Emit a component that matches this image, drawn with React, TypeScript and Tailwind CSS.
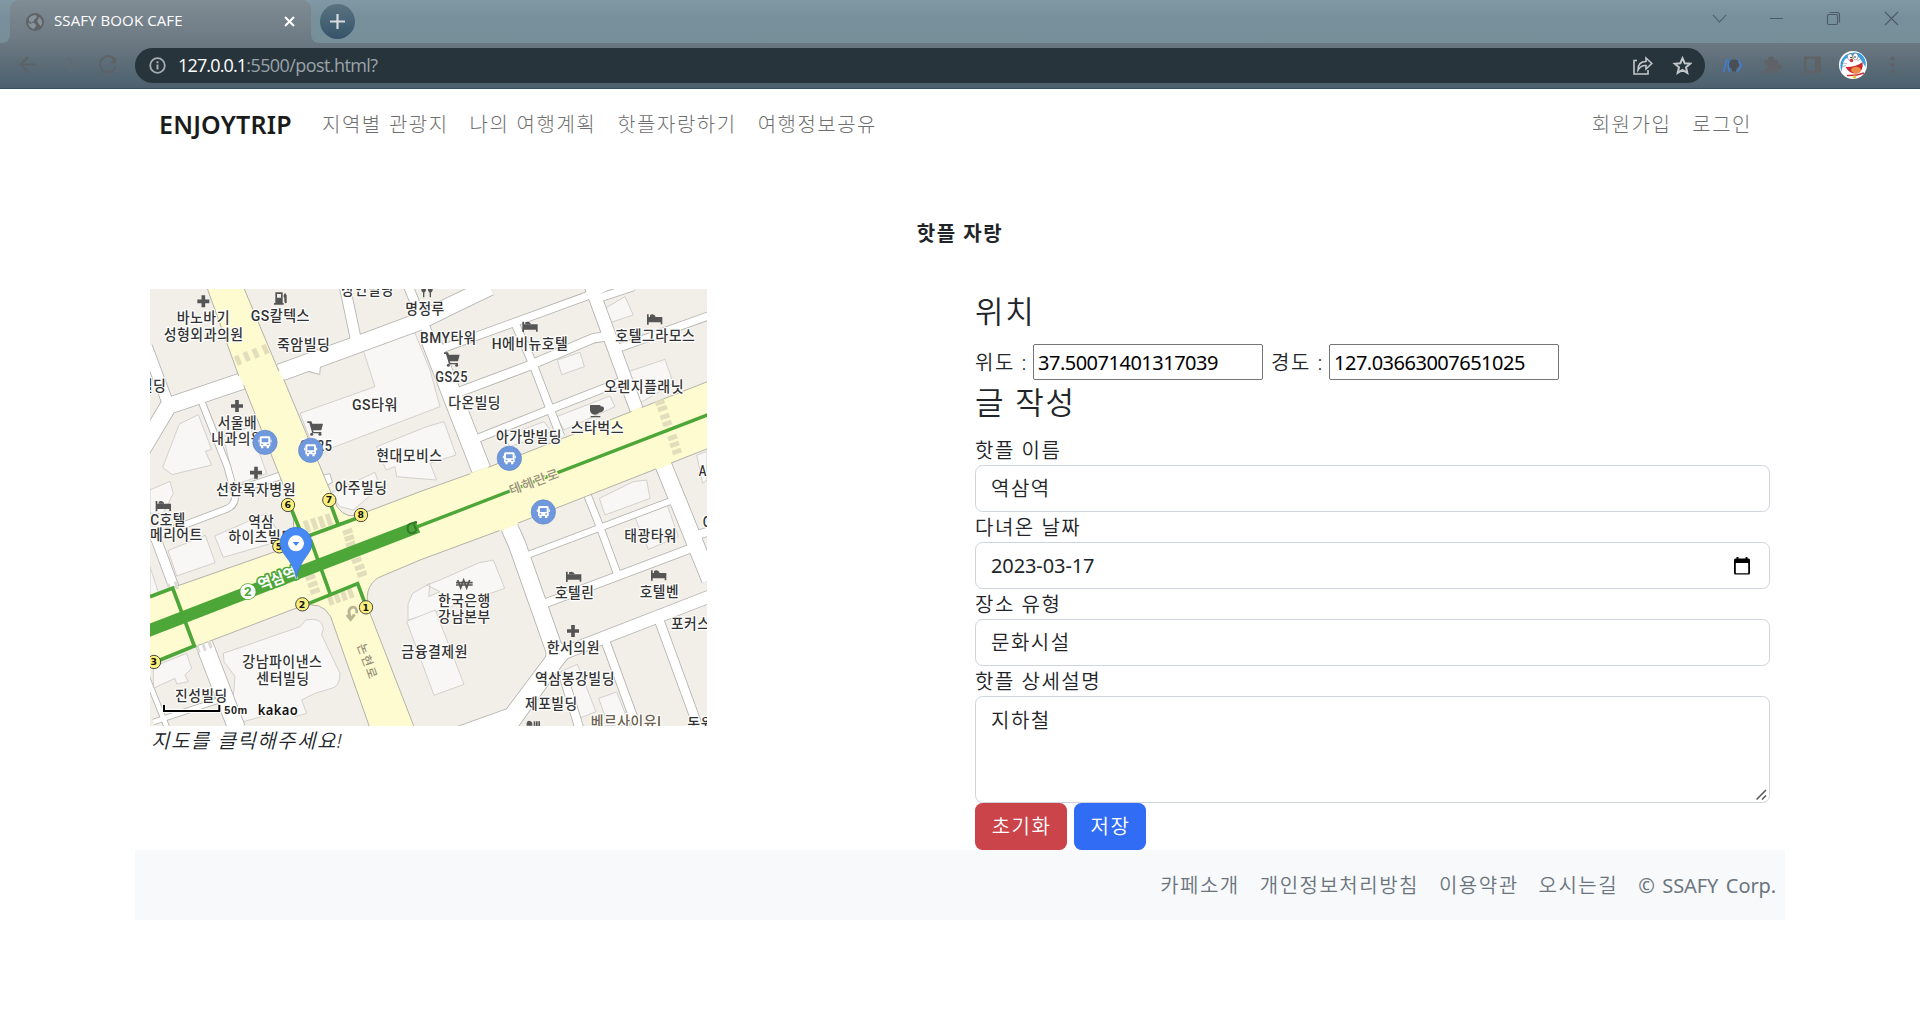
import React from "react";

const KR = "font-['Noto_Sans','Noto_Sans_CJK_KR',sans-serif]";

/* Map drawing units: one unit is a third of a pixel. */
type Road = { d: string; w: number };

const roads: Road[] = [
  { d: "M0 520L85 378L310 302", w: 48 },
  { d: "M420 278L640 198L830 128L930 78L1050 20", w: 50 },
  { d: "M20 200L80 360", w: 32 },
  { d: "M612 10L648 180", w: 30 },
  { d: "M805 20L868 170", w: 26 },
  { d: "M183 360L262 560L284 640Q290 672 262 686L30 774", w: 18 },
  { d: "M280 634L420 588", w: 20 },
  { d: "M38 750L105 930", w: 28 },
  { d: "M190 1085L290 1345", w: 50 },
  { d: "M20 1190L82 1345", w: 14 },
  { d: "M40 1326L255 1255", w: 14 },
  { d: "M868 170L1028 580", w: 56 },
  { d: "M890 212L1330 52L1400 20", w: 22 },
  { d: "M1350 10L1492 395", w: 38 },
  { d: "M1375 55L1480 20", w: 22 },
  { d: "M1425 208L1710 106", w: 22 },
  { d: "M960 335L1170 256L1360 175L1405 168", w: 26 },
  { d: "M1125 130L1180 255L1262 470", w: 22 },
  { d: "M1005 478L1230 388L1450 302", w: 22 },
  { d: "M1105 735L1130 790L1245 1115", w: 50 },
  { d: "M1268 1180L1318 1345", w: 24 },
  { d: "M1155 828L1600 660", w: 18 },
  { d: "M1340 640L1372 720L1432 882", w: 20 },
  { d: "M1210 972L1650 806", w: 24 },
  { d: "M1568 550L1615 665L1710 900", w: 48 },
  { d: "M1275 1118L1720 945", w: 36 },
  { d: "M1395 1080L1492 1345", w: 24 },
  { d: "M1558 1022L1676 1345", w: 26 },
  { d: "M1655 770L1720 750", w: 24 },
];

const buildings = [
  "M480 400L705 320L660 180L800 145L822 152L870 270L900 380L580 502L530 530Z",
  "M118 432L175 404L215 508L196 514L215 555L96 584L68 562Z",
  "M250 470L330 440L380 580L285 615Z",
  "M710 500L860 440L912 425L948 525L870 550L890 600L770 590L765 560L738 570Z",
  "M570 640L705 577L720 622L640 690L600 680Z",
  "M84 812L196 766L226 848L110 888Z",
  "M224 768L380 700L430 780L250 832Z",
  "M30 630L90 604L100 640L70 700L30 700Z",
  "M30 860L56 940L30 950Z",
  "M250 1120L285 1108L480 1040L498 1020Q545 1010 550 1045L545 1065L600 1180Q600 1220 575 1225L525 1240L485 1260L500 1300L465 1310L455 1285L310 1325L280 1250L285 1190L252 1145Z",
  "M40 1160L140 1120L155 1165L135 1185L145 1205L110 1212L105 1195L40 1225Z",
  "M804 972L818 940L870 910L866 950L900 935L860 915L900 900L1018 848L1060 840L1094 925L1010 955L840 1010L804 1020Z",
  "M800 1024L886 990L972 1213L882 1246Z",
  "M1395 85L1455 50L1480 105L1410 128Z",
  "M1252 240L1320 217L1333 260L1265 284Z",
  "M1465 275L1575 238L1600 310L1490 375Z",
  "M1250 410L1410 348L1425 380L1272 450Z",
  "M1090 470L1212 425L1235 455L1110 500Z",
  "M1378 655L1480 605L1520 600L1530 655L1395 705Z",
  "M1483 708L1580 670L1615 770L1525 808Z",
  "M1262 1175L1312 1153L1368 1295L1310 1318Z",
  "M1376 1255L1430 1236L1470 1337L1405 1337Z",
  "M1670 525L1701 514L1701 600L1688 610Z",
];

type Label = [string, number, number, number];

// text, centre x, baseline y, drawn width
const labels: Label[] = [
  ["바노바기", 190, 130, 160],
  ["성형외과의원", 191, 179, 240],
  ["GS칼텍스", 421, 123, 178],
  ["죽암빌딩", 491, 211, 160],
  ["상언빌딩", 683, 46, 158],
  ["명정루", 855, 103, 118],
  ["빌딩", 39, 333, 80],
  ["GS타워", 705, 389, 138],
  ["서울배", 292, 443, 118],
  ["내과의원", 293, 492, 158],
  ["GS25", 528, 514, 98],
  ["현대모비스", 808, 544, 198],
  ["선한목자병원", 348, 644, 240],
  ["아주빌딩", 663, 638, 158],
  ["BMY타워", 925, 189, 170],
  ["H에비뉴호텔", 1170, 206, 230],
  ["GS25", 935, 306, 98],
  ["다온빌딩", 1004, 385, 158],
  ["호텔그라모스", 1546, 183, 240],
  ["오렌지플래닛", 1512, 335, 240],
  ["아가방빌딩", 1167, 485, 198],
  ["스타벅스", 1372, 460, 160],
  ["C호텔", 84, 734, 106],
  ["메리어트", 109, 781, 158],
  ["역삼", 364, 741, 78],
  ["하이츠빌딩", 364, 787, 198],
  ["강남파이낸스", 427, 1162, 240],
  ["센터빌딩", 429, 1211, 160],
  ["진성빌딩", 184, 1262, 158],
  ["금융결제원", 884, 1132, 200],
  ["한국은행", 973, 978, 158],
  ["강남본부", 973, 1027, 158],
  ["호텔린", 1304, 955, 118],
  ["호텔벤", 1558, 952, 118],
  ["태광타워", 1532, 782, 158],
  ["포커스", 1652, 1048, 118],
  ["한서의원", 1300, 1118, 160],
  ["역삼봉강빌딩", 1305, 1212, 240],
  ["제포빌딩", 1234, 1288, 158],
  ["동원", 1682, 1347, 80],
  ["A", 1688, 588, 24],
  ["C", 1701, 742, 26],
];

function Plus({ x, y }: { x: number; y: number }) {
  return <path d={`M${x - 18} ${y}h36M${x} ${y - 18}v36`} stroke="#555" strokeWidth="11" />;
}

function Bed({ x, y }: { x: number; y: number }) {
  return (
    <g transform={`translate(${x} ${y})`} fill="#555">
      <path d="M-23 -17h5v8h41v22h-5v-6h-36v7h-5z" />
      <path d="M-14 -15q10 -5 16 3v3h-16z" />
    </g>
  );
}

function Cart({ x, y }: { x: number; y: number }) {
  return (
    <g transform={`translate(${x} ${y})`} fill="#555">
      <path d="M-24 -21h12l3 7h32l-5 20h-25l2 5h23v4h-27l-9 -31h-6z" />
      <circle cx="-11" cy="18" r="4.5" />
      <circle cx="14" cy="18" r="4.5" />
    </g>
  );
}

function Bus({ x, y }: { x: number; y: number }) {
  return (
    <g transform={`translate(${x} ${y})`}>
      <circle r="36.5" fill="#7098dc" stroke="#5d84c8" strokeWidth="2" />
      <path
        fill="#fff"
        fillRule="evenodd"
        d="M-12 -18h24q4 0 4 5v25h-4v6h-7v-6h-10v6h-7v-6h-4v-25q0 -5 4 -5zM-10 -12v12h20v-12zM-11 4v4h5v-4zM6 4v4h5v-4z"
      />
      <path d="M-18 -8v8M18 -8v8" stroke="#fff" strokeWidth="3" />
    </g>
  );
}

function Exit({ x, y, n }: { x: number; y: number; n: string }) {
  return (
    <g>
      <circle cx={x} cy={y} r="20" fill="#fcf07c" stroke="#4a4a42" strokeWidth="3" />
      <text
        x={x}
        y={y + 10}
        textAnchor="middle"
        fontSize="28"
        fontWeight="700"
        fill="#111"
        fontFamily="DejaVu Sans, sans-serif"
      >
        {n}
      </text>
    </g>
  );
}

function MapView() {
  const halo = {
    stroke: "#fff",
    strokeWidth: 7,
    paintOrder: "stroke" as const,
    strokeLinejoin: "round" as const,
  };
  return (
    <svg className="block h-[437px] w-[557px]" viewBox="30 27 1671 1311" preserveAspectRatio="none">
      <rect x="30" y="27" width="1671" height="1311" fill="#f2efe9" />
      <g fill="#f8f7f5" stroke="#d2d1cd" strokeWidth="3">
        {buildings.map((d) => (
          <path key={d} d={d} />
        ))}
      </g>
      <g fill="none" stroke="#b3b2ae" strokeLinejoin="round">
        {roads.map((r) => (
          <path key={r.d} d={r.d} strokeWidth={r.w + 5} />
        ))}
        <path d="M1225 1085L1310 1100L1262 1160L1130 1345H940L1100 1288L1218 1130Z" strokeWidth="5" />
        <path d="M480 268L540 258L538 282L510 274Z" strokeWidth="5" />
        <path d="M545 588L568 582L576 606L556 618Z" strokeWidth="5" />
      </g>
      <g fill="none" stroke="#fff" strokeLinejoin="round">
        {roads.map((r) => (
          <path key={r.d} d={r.d} strokeWidth={r.w} />
        ))}
      </g>
      <path d="M1225 1085L1310 1100L1262 1160L1130 1345H940L1100 1288L1218 1130Z" fill="#fff" />
      <path d="M470 268L540 258L538 282L510 274Z" fill="#fff" />
      <path d="M545 588L568 582L576 606L556 618Z" fill="#fff" />

      <path
        d="M200 20L295 285L312 318L430 615L460 715Q470 780 420 810L20 950V1152L205 1085L480 980Q545 960 572 1010L690 1345H824L690 1000Q665 925 715 893L840 840L1075 753L1135 729L1545 568L1710 503V302L1504 383L1050 560L840 635L650 707Q600 715 580 655L432 300L415 270L310 20Z"
        fill="#fffbd0"
        stroke="#b3b2a8"
        strokeWidth="3"
      />
      <g stroke="#fffbd0" strokeWidth="6">
        <path d="M296 288L311 316" stroke="#fffdf0" />
        <path d="M417 274L431 298" stroke="#fffdf0" />
        <path d="M990 583L1045 563M1475 394L1505 383M1078 751L1134 729M1548 566L1593 549" />
      </g>

      <g stroke="#e2debb" strokeWidth="15">
        <path d="M288 227l12 27M314 216l12 27M341 206l12 27M370 194l12 27" />
        <path d="M1546 372l27 -9M1554 390l27 -9M1561 414l27 -9M1568 435l27 -9M1584 477l27 -9M1590 498l27 -9M1597 519l27 -9" />
        <path d="M495 722l12 34M517 715l12 34M539 709l12 34M561 702l12 34" />
        <path d="M609 760l28 -10M614 779l28 -10M618 798l28 -10M636 846l28 -10M645 867l28 -10M652 887l28 -10" />
        <path d="M497 897l28 -10M504 918l28 -10M511 938l28 -10" />
        <path d="M567 947l10 28M587 940l10 28M607 933l10 28M627 926l10 28" />
        <path d="M170 1096l8 22M188 1090l8 22M206 1083l8 22M84 912l8 22M105 905l8 22" stroke="#dcdad2" strokeWidth="9" />
      </g>

      <path d="M20 1054L834 740" stroke="#4da738" strokeWidth="37" fill="none" />
      <path d="M825 743L1710 402" stroke="#4da738" strokeWidth="10" fill="none" />
      <g stroke="#4da738" strokeWidth="11" fill="none">
        <path d="M30 950L98 924L163 1098L60 1140" />
        <path d="M455 690L480 750M505 768L650 715M568 662L595 735M512 780L570 940" />
        <path d="M505 971L653 911L675 970" />
      </g>

      <g fill="none" stroke="#b9b593" strokeWidth="8">
        <path d="M650 1000v-8q-4 -16 -18 -8q-8 8 -4 18l4 12" />
        <path d="M620 1005l12 14l12 -16" />
      </g>
      <path d="M828 755q-22 12 -25 -8q-2 -14 14 -17l14 -4M822 733l8 20" fill="none" stroke="#35792a" strokeWidth="6" />

      <g fill="#555">
        <Plus x={190} y={64} />
        <Plus x={291} y={378} />
        <Plus x={348} y={578} />
        <Plus x={1299} y={1053} />
        <Bed x={1170} y={142} />
        <Bed x={1544} y={120} />
        <Bed x={70} y={680} />
        <Bed x={1301} y={892} />
        <Bed x={1556} y={888} />
        <Cart x={526} y={445} />
        <Cart x={936} y={238} />
        <path fillRule="evenodd" d="M406 37h22v32h3v5h-29v-5h4zM411 42v11h12v-11zM430 48l5 -10l5 8v22q-6 5 -7 -4v-10z" />
        <path d="M1350 375h31v4q12 -1 11 9q-2 9 -15 10q-5 6 -13 6q-13 -1 -14 -14zM1352 408h29v4h-29z" />
        <path d="M844 20q-2 16 5 18v14h4v-14q7 -2 5 -18zM864 20q-2 16 5 18v14h4v-14q7 -2 5 -18z" />
        <path d="M1160 1337v-8q2 -8 10 -6q7 2 7 8v6zM1181 1324h5v14h-5zM1188 1324h5v14h-5zM1195 1324h5v14h-5z" />
      </g>
      <path d="M953 900l9 24l9 -24l9 24l9 -24M948 908h50M948 915h50" fill="none" stroke="#555" strokeWidth="5" />

      <g
        fontFamily="Roboto, 'Noto Sans CJK KR', sans-serif"
        fontSize="44"
        fontWeight="500"
        fill="#333"
        textAnchor="middle"
        {...halo}
      >
        {labels.map(([t, x, y, w]) => (
          <text key={`${t}${x}`} x={x} y={y} textLength={w} lengthAdjust="spacingAndGlyphs">
            {t}
          </text>
        ))}
        <text x={1458} y={1342} textLength={212} lengthAdjust="spacingAndGlyphs" fill="#6b604b">
          베르사이유I
        </text>
      </g>
      <g
        fontFamily="'Noto Sans CJK KR', sans-serif"
        fontWeight="500"
        fill="#96917a"
        stroke="#fffbd0"
        strokeWidth="6"
        paintOrder="stroke"
      >
        <text transform="translate(1114 645) rotate(-20)" fontSize="39" textLength="156">
          테헤란로
        </text>
        <text transform="translate(651 1096) rotate(70)" fontSize="36" textLength="110">
          논현로
        </text>
      </g>

      <Bus x={375} y={487} />
      <Bus x={512} y={511} />
      <Bus x={1108} y={535} />
      <Bus x={1210} y={696} />

      <g transform="translate(324 935)">
        <circle r="25" fill="#4da738" />
        <circle r="23" fill="#fff" />
        <text y="14" textAnchor="middle" fontSize="40" fontWeight="700" fill="#4da738" fontFamily="Roboto, sans-serif">
          2
        </text>
      </g>
      <text
        transform="translate(361 932) rotate(-20)"
        fontSize="46"
        fontWeight="700"
        fill="#fff"
        stroke="#4da738"
        strokeWidth="10"
        strokeLinejoin="round"
        paintOrder="stroke"
        fontFamily="'Noto Sans CJK KR', sans-serif"
        textLength="124"
      >
        역삼역
      </text>

      <Exit x={444} y={675} n="6" />
      <Exit x={568} y={660} n="7" />
      <Exit x={663} y={705} n="8" />
      <Exit x={418} y={799} n="5" />
      <Exit x={487} y={973} n="2" />
      <Exit x={678} y={982} n="1" />
      <Exit x={42} y={1146} n="3" />

      <path
        d="M469 896Q465 862 432 822Q420 806 420 790A48 48 0 0 1 516 790Q516 806 504 822Q473 862 469 896Z"
        fill="#4689f2"
        stroke="#3474d8"
        strokeWidth="2"
      />
      <circle cx="468" cy="790" r="24" fill="#fff" />
      <path d="M458 786h20l-10 12z" fill="#4689f2" />

      <path d="M72 1275v18h166v-18" fill="none" stroke="#fff" strokeWidth="12" />
      <path d="M72 1275v18h166v-18" fill="none" stroke="#000" strokeWidth="6" />
      <text
        x="253"
        y="1303"
        fontSize="31"
        fontWeight="700"
        textLength="70"
        lengthAdjust="spacingAndGlyphs"
        fontFamily="Liberation Sans, sans-serif"
        fill="#222"
        {...halo}
      >
        50m
      </text>
      <text
        x="353"
        y="1304"
        fontSize="45"
        fontWeight="600"
        textLength="122"
        lengthAdjust="spacingAndGlyphs"
        fontFamily="'Noto Sans', sans-serif"
        fill="#111"
        {...halo}
      >
        kakao
      </text>
    </svg>
  );
}

function TabStrip() {
  return (
    <div className="flex h-[43px] items-start justify-between bg-linear-to-b from-[#8198a5] via-[#78909b] via-40% to-[#768f99]">
      <div className="flex">
        <div className="relative ml-[10px] flex h-[43px] w-[301px] items-center rounded-t-[9px] bg-linear-to-b from-[#808c94] to-[#6c7982] pl-4 pr-[16px]">
          <svg className="absolute -left-[9px] bottom-0 size-[9px]" viewBox="0 0 9 9">
            <path d="M9 0V9H0Q9 9 9 0Z" fill="#6c7982" />
          </svg>
          <svg className="absolute -right-[9px] bottom-0 size-[9px]" viewBox="0 0 9 9">
            <path d="M0 0V9H9Q0 9 0 0Z" fill="#6c7982" />
          </svg>
          <svg className="size-[18px]" viewBox="0 0 18 18">
            <circle cx="9" cy="9" r="9" fill="#5f6367" />
            <path d="M3 5Q5 2.500 9 2L11 3L10 5.500L8.500 6L8 8.500L5 8.500L7 10L9.500 10.500L10 13L8 16Q3 15 2 9.500L4.500 11L6 10.500L3 8ZM12.500 3.500Q16.500 6.500 16 11L14.500 13L13 11L11.500 9L11.500 6.500L13 5.500Z" fill="#87939a" />
          </svg>
          <span className="mb-[3px] ml-[10px] flex-1 whitespace-nowrap font-['Open_Sans',sans-serif] text-[15px] leading-5 tracking-[0.1px] text-white">
            SSAFY BOOK CAFE
          </span>
          <svg className="size-[11px]" viewBox="0 0 11 11">
            <path d="M1 1L10 10M10 1L1 10" stroke="#fff" strokeWidth="2" />
          </svg>
        </div>
        <div className="ml-[9px] mt-[4px] flex size-[35px] items-center justify-center rounded-full bg-linear-to-b from-[#5a7380] to-[#35536a]">
          <svg className="size-[15px]" viewBox="0 0 15 15">
            <path d="M7.5 0V15M0 7.5H15" stroke="#d5dbdf" strokeWidth="2.2" />
          </svg>
        </div>
      </div>
      <svg className="h-[37px] w-[210px]" viewBox="1710 0 210 37" fill="none" stroke="#4b5a64" strokeWidth="1.1">
        <path d="M1713 15L1719.5 22L1726 15M1770 18.5H1783M1885 12L1898 25M1898 12L1885 25" />
        <rect x="1827.5" y="14.5" width="10" height="10" rx="1.5" />
        <path d="M1829.5 12.5H1837Q1839.5 12.5 1839.5 15V22.5" />
      </svg>
    </div>
  );
}

function Toolbar() {
  return (
    <div className="flex h-[46px] items-center border-b border-[#35505f] bg-linear-to-b from-[#6b7881] to-[#4b606e]">
      <svg className="h-[45px] w-[135px] shrink-0" viewBox="0 43 135 45" fill="none" strokeWidth="2">
        <path d="M36 64.5H20.5M28 57L20.5 64.5L28 72" stroke="#5d6266" />
        <path d="M60 64.5H75.5M68 57L75.5 64.5L68 72" stroke="#5f6c74" />
        <path d="M115 60.5A8 8 0 1 0 115.5 67" stroke="#5d6266" />
        <path d="M116 57V63.5H109.5Z" fill="#5d6266" />
      </svg>
      <div className="flex h-[35px] w-[1570px] items-center rounded-full bg-[#28343c] pl-[14px] pr-[13px]">
        <svg className="size-[17px]" viewBox="0 0 17 17" fill="none" stroke="#a5adb2">
          <circle cx="8.5" cy="8.5" r="7.3" strokeWidth="1.8" />
          <path d="M8.5 7.5V12.5M8.5 4.3V6.2" strokeWidth="2" />
        </svg>
        <div className="mb-px ml-[12px] flex-1 whitespace-nowrap font-['Open_Sans',sans-serif] text-[18px] leading-6 tracking-[-0.85px]">
          <span className="text-white">127.0.0.1</span>
          <span className="tracking-[-0.58px] text-[#9aa3a9]">:5500/post.html?</span>
        </div>
        <svg className="h-[20px] w-[60px]" viewBox="1632 56 60 20" fill="none" stroke="#c3c7ca" strokeWidth="1.6">
          <path d="M1637 60.5H1634V74H1648V70" />
          <path d="M1638 70Q1638 61.5 1646 61.5V58L1651.8 63.5L1646 69V65.5Q1641 65 1638 70Z" />
          <path d="M1682.5 58.2L1684.7 63.2L1690.2 63.7L1686 67.3L1687.3 72.8L1682.5 69.9L1677.7 72.8L1679 67.3L1674.8 63.7L1680.3 63.2Z" strokeWidth="2" />
        </svg>
      </div>
      <svg className="h-[45px] w-[215px] shrink-0" viewBox="1705 43 215 45">
        <g fill="none" stroke="#3f7fd6" strokeWidth="1.5">
          <path d="M1723.5 72L1727 59M1731 59Q1726 65 1730 72M1737 59L1741.5 65.5L1737 72" />
        </g>
        <circle cx="1734" cy="64.5" r="5" fill="#4b4f54" />
        <path d="M1730 59.5L1733 61H1735L1738 59.5V65H1730ZM1732 68H1736V71.5H1732Z" fill="#4b4f54" />
        <path
          d="M1764.5 60H1768.5Q1767.5 56.5 1771 56.3Q1774.5 56.5 1773.5 60H1778V64.5Q1782 63.5 1782 67Q1782 70 1778 69.2V73.5H1773.5Q1773.5 70 1771 70Q1768.5 70 1768.5 73.5H1764.5V69Q1767.5 69 1767.5 66.7Q1767.5 64.3 1764.5 64.3Z"
          fill="#606266"
        />
        <path d="M1804 56.5H1821V73.5H1804ZM1806.5 59V71H1815V59Z" fill="#606266" fillRule="evenodd" />
        <circle cx="1853" cy="65" r="14" fill="#fff" />
        <path d="M1841.5 72Q1838 62 1845 55.5Q1852 50.5 1860 53.5Q1867 58 1865.5 67L1861 60Q1858 55 1853 56Q1843 57 1842.5 66Z" fill="#3aa0e0" />
        <g fill="#fff" stroke="#555" strokeWidth="0.5">
          <ellipse cx="1850" cy="57" rx="2.6" ry="3.3" />
          <ellipse cx="1855.5" cy="56.5" rx="2.6" ry="3.3" />
        </g>
        <circle cx="1851" cy="57.5" r="0.8" fill="#222" />
        <circle cx="1855" cy="57" r="0.8" fill="#222" />
        <circle cx="1851.5" cy="60.5" r="1.7" fill="#d22f35" />
        <path d="M1845.5 67Q1857 67 1862.5 62Q1864 71 1857 73.5Q1850 74.5 1845.5 67Z" fill="#c8282e" />
        <ellipse cx="1856" cy="70" rx="5" ry="3.2" fill="#ee8b45" />
        <path d="M1847 75.5Q1856 76 1864 73" fill="none" stroke="#d22f35" strokeWidth="1.5" />
        <path d="M1841 63L1847 63.5M1841.5 67L1846 65.5M1857 61L1862 58" stroke="#777" strokeWidth="0.5" />
        <circle cx="1854.5" cy="77" r="1.8" fill="#e8c53a" />
        <g fill="#606266">
          <circle cx="1892.5" cy="58.5" r="2" />
          <circle cx="1892.5" cy="65" r="2" />
          <circle cx="1892.5" cy="71.5" r="2" />
        </g>
      </svg>
    </div>
  );
}

function Field({ label, value, icon }: { label: string; value: string; icon?: React.ReactNode }) {
  return (
    <div>
      <div className="h-[30px] leading-[31px]">{label}</div>
      <div className="flex h-[47px] items-center justify-between rounded-[7.5px] border border-[#ced4da] bg-white pl-[15px] pr-[19px] pt-px">
        <span>{value}</span>
        {icon}
      </div>
    </div>
  );
}

const calendar = (
  <svg className="mb-px h-[18px] w-[16px]" viewBox="0 0 16 18">
    <path
      d="M2.5 0h2v1.5h7v-1.5h2v1.5h1q1.5 0 1.5 1.5v13q0 1.5 -1.5 1.5h-13q-1.5 0 -1.5 -1.5v-13q0 -1.5 1.5 -1.5h1zM1.800 6v10.200h12.400v-10.200z"
      fill="#000"
      fillRule="evenodd"
    />
  </svg>
);

export default function App() {
  return (
    <div
      className={`flex h-[1020px] w-[1920px] flex-col overflow-hidden bg-white text-[20px] leading-[30px] tracking-[1.5px] text-[#212529] ${KR}`}
    >
      <header>
        <TabStrip />
        <Toolbar />
      </header>

      <div className="mx-auto w-[1650px]">
        <nav className="flex h-[71px] items-center whitespace-nowrap px-6 font-light text-[#6f6f6f]">
          <span className="mb-[2px] w-[163px] text-[25px] font-semibold tracking-[0.2px] text-[#1b1b1b]">ENJOYTRIP</span>
          <div className="flex flex-1 gap-[21px] [word-spacing:0.5px]">
            <span>지역별 관광지</span>
            <span>나의 여행계획</span>
            <span>핫플자랑하기</span>
            <span>여행정보공유</span>
          </div>
          <div className="flex gap-[21px] pr-[9px]">
            <span>회원가입</span>
            <span>로그인</span>
          </div>
        </nav>

        <h1 className="mt-[59px] h-[30px] text-center text-[20px] font-bold">핫플 자랑</h1>

        <main className="mt-[40px] flex h-[561px] justify-between px-[15px]">
          <section>
            <MapView />
            <em className="block pl-[1px] font-[350] text-[#212529]">지도를 클릭해주세요!</em>
          </section>

          <section className="w-[795px] font-[350]">
            <h2 className="pt-[4px] text-[31px] font-[350] leading-[36px] tracking-[1.8px]">위치</h2>
            <div className="mt-[15px] flex h-[36px] items-center whitespace-nowrap">
              <span className="mt-px w-[58px]">위도 :</span>
              <span className="flex h-[36px] w-[230px] items-center rounded-[2px] border border-[#767676] pl-[4px] pt-px font-normal tracking-[-0.5px] text-black">
                37.50071401317039
              </span>
              <span className="ml-[8px] mt-px w-[58px]">경도 :</span>
              <span className="flex h-[36px] w-[230px] items-center rounded-[2px] border border-[#767676] pl-[4px] pt-px font-normal tracking-[-0.5px] text-black">
                127.03663007651025
              </span>
            </div>
            <h2 className="h-[55px] pt-[4px] text-[31px] font-[350] leading-[36px] tracking-[1.8px]">글 작성</h2>
            <Field label="핫플 이름" value="역삼역" />
            <div className="[&_span]:font-normal [&_span]:tracking-[-0.1px]">
              <Field label="다녀온 날짜" value="2023-03-17" icon={calendar} />
            </div>
            <Field label="장소 유형" value="문화시설" />
            <div className="h-[30px] leading-[31px]">핫플 상세설명</div>
            <div className="flex h-[107px] items-start justify-between rounded-[7.5px] border border-[#ced4da] pl-[15px] pr-[2px] pt-[9px]">
              <span>지하철</span>
              <svg className="mb-[2px] size-[11px] self-end" viewBox="0 0 11 11">
                <path d="M0.5 10.5L10 1M6 10.5L10 6.5" stroke="#555" strokeWidth="1.5" />
              </svg>
            </div>
            <div className="flex gap-[7px] text-white">
              <button className="h-[47px] w-[92px] rounded-[7.5px] bg-[#cb444a] pl-[1px] pt-px">초기화</button>
              <button className="h-[47px] w-[72px] rounded-[7.5px] bg-[#316cf4] pl-[1px] pt-px">저장</button>
            </div>
          </section>
        </main>

        <footer className="flex h-[70px] items-center justify-end gap-[20px] whitespace-nowrap bg-[#f7f9fb] pr-[9px] pt-px text-[#6c757d]">
          <span className="font-[350]">카페소개</span>
          <span className="font-[350]">개인정보처리방침</span>
          <span className="font-[350]">이용약관</span>
          <span className="font-[350]">오시는길</span>
          <span className="tracking-[-0.1px] [word-spacing:2.5px]">© SSAFY Corp.</span>
        </footer>
      </div>
    </div>
  );
}
